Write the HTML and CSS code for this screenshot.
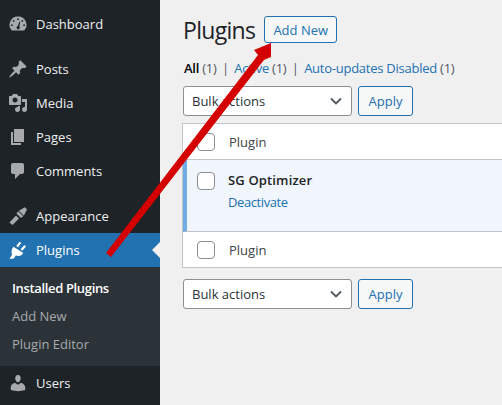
FILE: index.html
```html
<!DOCTYPE html>
<html lang="en">
<head>
  <meta charset="UTF-8" />
  <title>Plugins</title>
  <link rel="stylesheet" href="styles.css">
</head>
<body>
  <div class="admin">
    <nav class="sidebar">
      <a class="menu-item gap-after">
        <svg class="menu-icon" viewBox="0 0 20 20"><path fill-rule="evenodd" d="M3.800 16.500h12.400A8.300 8.300 0 0 0 10 2.500a8.300 8.300 0 0 0-6.200 14zM10 4.300a.9.9 0 1 1 0 1.800.9.9 0 0 1 0-1.800zM5.700 6a.9.9 0 1 1 0 1.800.9.9 0 0 1 0-1.800zm8.600 0a.9.9 0 1 1 0 1.800.9.9 0 0 1 0-1.800zM3.900 10.300a.9.9 0 1 1 0 1.800.9.9 0 0 1 0-1.800zm12.200 0a.9.9 0 1 1 0 1.800.9.9 0 0 1 0-1.800zM11.500 7.500l.8.300-1 4.700a1.600 1.600 0 1 1-1.500-.4z"/></svg>
        Dashboard
      </a>
      <a class="menu-item">
        <svg class="menu-icon" viewBox="0 0 20 20"><path d="M10.440 3.020l1.820-1.820 6.360 6.350-1.830 1.820c-1.050-.68-2.480-.57-3.410.36l-.75.75c-.92.93-1.040 2.350-.35 3.410l-1.830 1.820-2.410-2.410-2.800 2.790c-.42.42-3.380 2.710-3.800 2.290s1.860-3.390 2.280-3.810l2.790-2.790L4.100 9.360l1.830-1.820c1.050.69 2.480.57 3.400-.36l.75-.75c.93-.92 1.050-2.350.36-3.410z"/></svg>
        Posts
      </a>
      <a class="menu-item">
        <svg class="menu-icon" viewBox="0 0 20 20"><path fill-rule="evenodd" d="M13 11V4c0-.55-.45-1-1-1h-1.670L9 1H5L3.670 3H2c-.55 0-1 .45-1 1v7c0 .55.45 1 1 1h10c.55 0 1-.45 1-1zM7 4.500c1.380 0 2.500 1.120 2.500 2.500S8.380 9.500 7 9.500 4.500 8.380 4.500 7 5.620 4.500 7 4.500z"/><path d="M14 6h5v10.500c0 1.380-1.120 2.500-2.500 2.500S14 17.880 14 16.500s1.120-2.500 2.500-2.500c.17 0 .34.020.5.050V9h-3V6zm-4 8.050V13h2v3.500c0 1.380-1.120 2.500-2.500 2.500S7 17.880 7 16.500 8.120 14 9.500 14c.17 0 .34.020.5.050z"/></svg>
        Media
      </a>
      <a class="menu-item">
        <svg class="menu-icon" viewBox="0 0 20 20"><path d="M6 15V2h10v13H6zm-1 1h8v2H3V5h2v11z"/></svg>
        Pages
      </a>
      <a class="menu-item gap-after">
        <svg class="menu-icon" viewBox="0 0 20 20"><path d="M5 2h9c1.100 0 2 .9 2 2v7c0 1.100-.9 2-2 2h-2l-5 5v-5H5c-1.100 0-2-.9-2-2V4c0-1.100.9-2 2-2z"/></svg>
        Comments
      </a>
      <a class="menu-item">
        <svg class="menu-icon" viewBox="0 0 20 20"><path d="M1.500 16.500L8 9.500l3 3-6.500 6.500zM8.500 7.500L13 12l2.200-1.800-5-5zM10.800 4.800l5 5L19 3.500 16.800 1.300z"/></svg>
        Appearance
      </a>
      <a class="menu-item current">
        <svg class="menu-icon" viewBox="0 0 20 20"><path d="M8.200 6l3.300-4.300 1.800 1.300-3.200 4.300zM12.500 9.200L16.500 5 18 6.500l-3.600 4.300zM5.500 6.800l9.800 6.200c-1.800 3.200-4.800 3.800-7.300 2.200l-2.200 3.300-4.300.5L4 14.500c-1-2.500-.5-5.500 1.500-7.700z"/></svg>
        Plugins
      </a>
      <div class="submenu">
        <a class="active">Installed Plugins</a>
        <a>Add New</a>
        <a>Plugin Editor</a>
      </div>
      <a class="menu-item">
        <svg class="menu-icon" viewBox="0 0 20 20"><path d="M10 9.250c-2.270 0-2.730-3.440-2.730-3.440C7 4.020 7.820 2 9.970 2c2.160 0 2.980 2.020 2.710 3.810 0 0-.41 3.440-2.680 3.440zm0 2.570L12.720 10c2.390 0 4.520 2.330 4.520 4.530v2.490s-3.650 1.130-7.240 1.130c-3.650 0-7.240-1.130-7.240-1.130v-2.490c0-2.250 1.940-4.530 4.430-4.530z"/></svg>
        Users
      </a>
    </nav>

    <main class="content">
      <div class="heading">
        <h1>Plugins</h1>
        <a class="btn add-new">Add New</a>
      </div>
      <div class="filters">
        <b>All</b> <span class="count">(1)</span>
        <span class="sep">|</span>
        <a>Active</a> <span class="count">(1)</span>
        <span class="sep">|</span>
        <a>Auto-updates Disabled</a> <span class="count">(1)</span>
      </div>
      <div class="bulk top">
        <div class="select">
          Bulk actions
          <svg class="chevron" viewBox="0 0 12 8"><path d="M1 1.500l5 5 5-5"/></svg>
        </div>
        <a class="btn apply">Apply</a>
      </div>
      <div class="table">
        <div class="row head">
          <span class="check"></span>
          <span class="col-title">Plugin</span>
        </div>
        <div class="row plugin">
          <span class="check"></span>
          <div class="plugin-info">
            <strong>SG Optimizer</strong>
            <a>Deactivate</a>
          </div>
        </div>
        <div class="row head">
          <span class="check"></span>
          <span class="col-title">Plugin</span>
        </div>
      </div>
      <div class="bulk">
        <div class="select">
          Bulk actions
          <svg class="chevron" viewBox="0 0 12 8"><path d="M1 1.500l5 5 5-5"/></svg>
        </div>
        <a class="btn apply">Apply</a>
      </div>
    </main>
  </div>

  <svg class="arrow" viewBox="0 0 502 405"><path d="M106 253L258 55 254 50 271 43 271 57 264 60 111 257z"/></svg>
</body>
</html>
```

FILE: styles.css
```css
html, body {
  margin: 0;
  height: 100%;
  overflow: hidden;
}

body {
  font-family: "Open Sans", sans-serif;
  font-size: 13px;
  color: #3c434a;
  background: #f0f0f1;
}

.admin {
  display: flex;
  height: 405px;
}

/* sidebar */
.sidebar {
  width: 160px;
  flex-shrink: 0;
  padding-top: 7px;
  box-sizing: border-box;
  background: #1d2327;
  overflow: hidden;
}

.menu-item {
  display: flex;
  align-items: center;
  height: 34px;
  padding-left: 8px;
  color: #f0f0f1;
  position: relative;
}

.menu-item.gap-after {
  margin-bottom: 11px;
}

.menu-icon {
  width: 20px;
  height: 20px;
  margin-right: 8px;
  fill: #a7aaad;
}

.menu-item.current {
  background: #2271b1;
  color: #fff;
}

.menu-item.current .menu-icon {
  fill: #fff;
}

.menu-item.current::after {
  content: "";
  position: absolute;
  right: 0;
  top: 9px;
  border: 8px solid transparent;
  border-right-color: #f0f0f1;
  border-left-width: 0;
}

.submenu {
  display: flex;
  flex-direction: column;
  padding: 7px 0 8px 12px;
  background: #2c3338;
  color: #a7aaad;
}

.submenu a {
  height: 28px;
  line-height: 28px;
}

.submenu .active {
  color: #fff;
  font-weight: 600;
  letter-spacing: -0.35px;
}

/* main */
.content {
  flex-grow: 1;
  min-width: 0;
  padding: 16px 0 0 23px;
}

.heading {
  display: flex;
  align-items: center;
  gap: 9px;
  height: 27px;
}

h1 {
  margin: 0;
  font-size: 23px;
  font-weight: 400;
  letter-spacing: -0.7px;
  color: #1d2327;
}

.btn {
  display: flex;
  align-items: center;
  justify-content: center;
  box-sizing: border-box;
  border: 1px solid #2271b1;
  border-radius: 3px;
  color: #2271b1;
  background: #f6f7f7;
}

.add-new {
  width: 73px;
  height: 27px;
}

.filters {
  margin-top: 16px;
  height: 18px;
  line-height: 18px;
  padding-left: 1px;
  letter-spacing: -0.25px;
  white-space: nowrap;
}

.filters b {
  color: #000;
  font-weight: 600;
}

.filters a {
  color: #2271b1;
}

.count {
  color: #50575e;
}

.sep {
  margin: 0 2.25px;
  color: #50575e;
}

.bulk {
  display: flex;
  gap: 6px;
  margin-top: 8px;
}

.bulk.top {
  margin-top: 9px;
}

.select {
  display: flex;
  align-items: center;
  justify-content: space-between;
  box-sizing: border-box;
  width: 169px;
  height: 30px;
  padding: 0 9px 0 8px;
  background: #fff;
  border: 1px solid #8c8f94;
  border-radius: 3px;
  color: #2c3338;
}

.chevron {
  width: 12px;
  height: 8px;
  fill: none;
  stroke: #50575e;
  stroke-width: 1.8;
}

.apply {
  width: 55px;
  height: 30px;
}

.table {
  width: 340px;
  margin: 7px 0 11px -1px;
  background: #fff;
  border: 1px solid #c3c4c7;
  border-right: 0;
}

.row {
  display: flex;
  align-items: center;
  padding-left: 14px;
}

.row.head {
  height: 35px;
}

.row.plugin {
  align-items: flex-start;
  height: 71px;
  padding-left: 10px;
  background: #f0f6fc;
  border: solid #c3c4c7;
  border-width: 1px 0;
  border-left: 4px solid #72aee6;
}

.check {
  width: 16px;
  height: 16px;
  flex-shrink: 0;
  border: 1px solid #8c8f94;
  border-radius: 4px;
  background: #fff;
}

.row.plugin .check {
  margin-top: 12px;
}

.col-title {
  margin-left: 14px;
}

.plugin-info {
  display: flex;
  flex-direction: column;
  margin-left: 13px;
  padding-top: 11px;
  gap: 4px;
}

.plugin-info strong {
  color: #1d2327;
  font-weight: 600;
  letter-spacing: 0.15px;
}

.plugin-info a {
  color: #2271b1;
  letter-spacing: -0.4px;
}

/* red annotation drawn over the screenshot */
.arrow {
  position: absolute;
  left: 0;
  top: 0;
  width: 502px;
  height: 405px;
  fill: #d40000;
  pointer-events: none;
}
```
